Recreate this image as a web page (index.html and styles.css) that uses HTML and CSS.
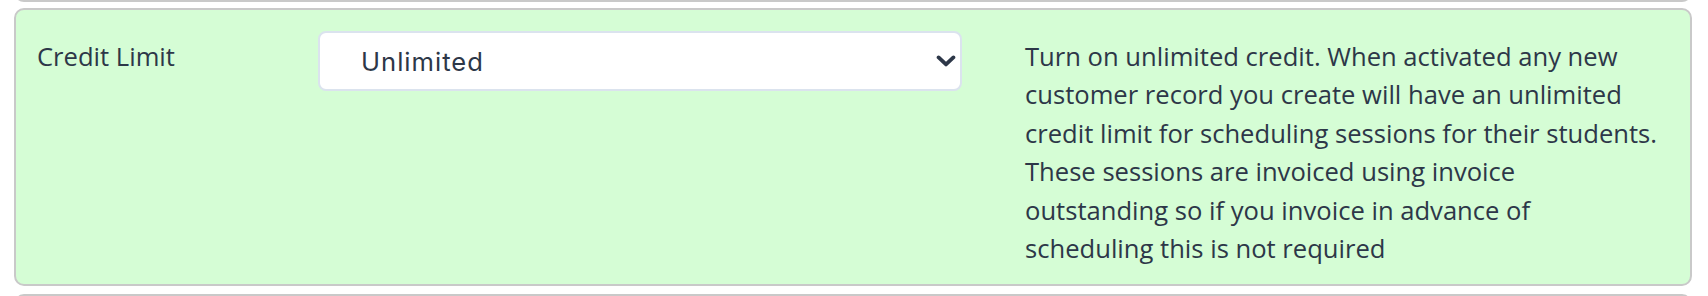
FILE: index.html
```html
<!DOCTYPE html>
<html lang="en">
<head>
    <meta charset="UTF-8">
    <meta name="viewport" content="width=device-width, initial-scale=1.0">
    <title>Credit Limit</title>
    <link rel="stylesheet" href="styles.css">
</head>
<body>
<div class="setting setting-prev"></div>

<div class="setting setting-active">
    <div class="setting-label">Credit Limit</div>
    <div class="setting-control">
        <div class="select-wrap">
            <select class="select">
                <option selected>Unlimited</option>
                <option>Limited</option>
            </select>
            <svg class="select-arrow" width="20" height="12" viewBox="0 0 20 12" aria-hidden="true">
                <polyline points="2.6,2.4 10,9.4 17.4,2.4" fill="none" stroke="#2d3748" stroke-width="3.8" stroke-linecap="round" stroke-linejoin="round"/>
            </svg>
        </div>
    </div>
    <div class="setting-help">
        Turn on unlimited credit. When activated any new customer record you create will have an unlimited
        credit limit for scheduling sessions for their students. These sessions are invoiced using invoice
        outstanding so if you invoice in advance of scheduling this is not required
    </div>
</div>

<div class="setting setting-next"></div>
</body>
</html>
```

FILE: styles.css
```css
body {
    margin: 0;
    font-family: "Open Sans", Arial, sans-serif;
    font-size: 25.6px;
    line-height: 1.5;
    color: #2d3748;
    background-color: #ffffff;
}

.setting {
    margin: 0 16px 8px 14px;
    border: 2px solid #c9c9c9;
    border-radius: 10px;
    background-color: #ffffff;
}

.setting-prev {
    height: 60px;
    margin-top: -62px;
    margin-bottom: 6px;
}

.setting-next {
    height: 60px;
}

.setting-active {
    display: grid;
    grid-template-columns: 218px 644px 1fr;
    column-gap: 63px;
    box-sizing: border-box;
    height: 278px;
    padding: 21px 10px 16px 21px;
    background-color: #d5fdd5;
}

.setting-label {
    padding-top: 7px;
    white-space: nowrap;
}

.select-wrap {
    position: relative;
}

.select {
    appearance: none;
    -webkit-appearance: none;
    width: 100%;
    height: 60px;
    margin: 0;
    padding: 0 60px 0 41px;
    border: 2px solid #dbe3ee;
    border-radius: 8px;
    background-color: #ffffff;
    font-family: Inter, "Open Sans", sans-serif;
    font-size: 25.6px;
    letter-spacing: 1px;
    color: #2d3748;
    outline: none;
}

.select-arrow {
    position: absolute;
    top: 24px;
    right: 6px;
    pointer-events: none;
}

.setting-help {
    max-width: 638px;
    padding-top: 7px;
}
```
